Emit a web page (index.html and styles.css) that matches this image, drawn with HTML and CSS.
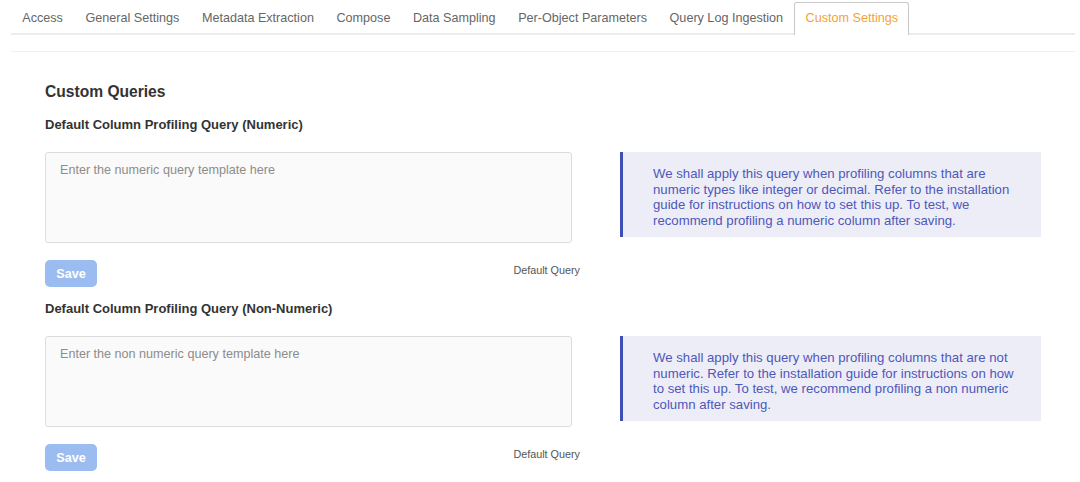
FILE: index.html
```html
<!DOCTYPE html>
<html>
<head>
<meta charset="utf-8">
<link rel="stylesheet" href="styles.css">
</head>
<body>
<div class="page">
  <nav class="tabs">
    <div class="tab">Access</div>
    <div class="tab">General Settings</div>
    <div class="tab">Metadata Extraction</div>
    <div class="tab">Compose</div>
    <div class="tab">Data Sampling</div>
    <div class="tab">Per-Object Parameters</div>
    <div class="tab">Query Log Ingestion</div>
    <div class="tab active">Custom Settings</div>
  </nav>
  <div class="divider"></div>
  <main class="content">
    <h2 class="title">Custom Queries</h2>

    <section class="query">
      <h3 class="subtitle">Default Column Profiling Query (Numeric)</h3>
      <div class="row">
        <div class="left">
          <textarea class="editor" placeholder="Enter the numeric query template here"></textarea>
          <div class="actions">
            <button class="save">Save</button>
            <span class="default">Default Query</span>
          </div>
        </div>
        <div class="info">We shall apply this query when profiling columns that are numeric types like integer or decimal. Refer to the installation guide for instructions on how to set this up. To test, we recommend profiling a numeric column after saving.</div>
      </div>
    </section>

    <section class="query">
      <h3 class="subtitle">Default Column Profiling Query (Non-Numeric)</h3>
      <div class="row">
        <div class="left">
          <textarea class="editor" placeholder="Enter the non numeric query template here"></textarea>
          <div class="actions">
            <button class="save">Save</button>
            <span class="default">Default Query</span>
          </div>
        </div>
        <div class="info">We shall apply this query when profiling columns that are not numeric. Refer to the installation guide for instructions on how to set this up. To test, we recommend profiling a non numeric column after saving.</div>
      </div>
    </section>
  </main>
</div>
</body>
</html>
```

FILE: styles.css
```css
* { box-sizing: border-box; }
html, body { margin: 0; padding: 0; background: #fff; }
body {
  font-family: "Liberation Sans", Arial, sans-serif;
  color: #333;
  overflow: hidden;
}
.page {
  margin: 0 5px 0 11px;
}
.tabs {
  display: flex;
  padding-top: 2px;
  border-bottom: 2px solid #ececec;
  height: 35px;
}
.tab {
  font-size: 12.6px;
  color: #666;
  padding: 0 10.3px;
  height: 32px;
  line-height: 30px;
  border: 1px solid transparent;
  border-bottom: none;
  white-space: nowrap;
}
.tab.active {
  color: #f2a23c;
  border-color: #c9c9c9;
  border-radius: 3px 3px 0 0;
  background: #fff;
  height: 33px;
  margin-bottom: -2px;
}
.divider {
  margin-top: 16px;
  border-top: 1px solid #f0f0f0;
}
.content {
  padding: 31px 28px 0 34px;
}
.title {
  margin: 0;
  font-size: 15.6px;
  font-weight: bold;
  line-height: 18px;
  color: #333;
}
.subtitle {
  margin: 0;
  font-size: 13px;
  font-weight: bold;
  line-height: 16px;
  color: #333;
}
.query { margin-top: 16px; }
.query + .query { margin-top: 14px; }
.row {
  display: flex;
  margin-top: 19px;
  align-items: flex-start;
}
.left {
  width: 535px;
  flex: none;
}
.editor {
  display: block;
  width: 527px;
  height: 91px;
  margin: 0;
  padding: 9px 14px;
  border: 1px solid #dcdcdc;
  border-radius: 3px;
  background: #fafafa;
  font-family: "Liberation Sans", Arial, sans-serif;
  font-size: 12.6px;
  line-height: 17px;
  resize: none;
  outline: none;
}
.editor::placeholder { color: #8c8c8c; }
.actions {
  display: flex;
  justify-content: space-between;
  align-items: flex-start;
  margin-top: 17px;
}
.save {
  width: 52px;
  height: 27px;
  border: none;
  border-radius: 5px;
  background: #9bbcf0;
  color: #fff;
  font-family: "Liberation Sans", Arial, sans-serif;
  font-size: 12.6px;
  font-weight: bold;
  padding: 0;
  margin: 0;
}
.default {
  font-size: 10.8px;
  color: #555;
  line-height: 14px;
  margin-top: 3px;
}
.info {
  margin-left: 40px;
  width: 421px;
  flex: none;
  background: #ededf7;
  border-left: 3px solid #3f50b5;
  padding: 14px 20px 8px 30px;
  color: #4d58b9;
  font-size: 13.2px;
  line-height: 15.7px;
}
```
